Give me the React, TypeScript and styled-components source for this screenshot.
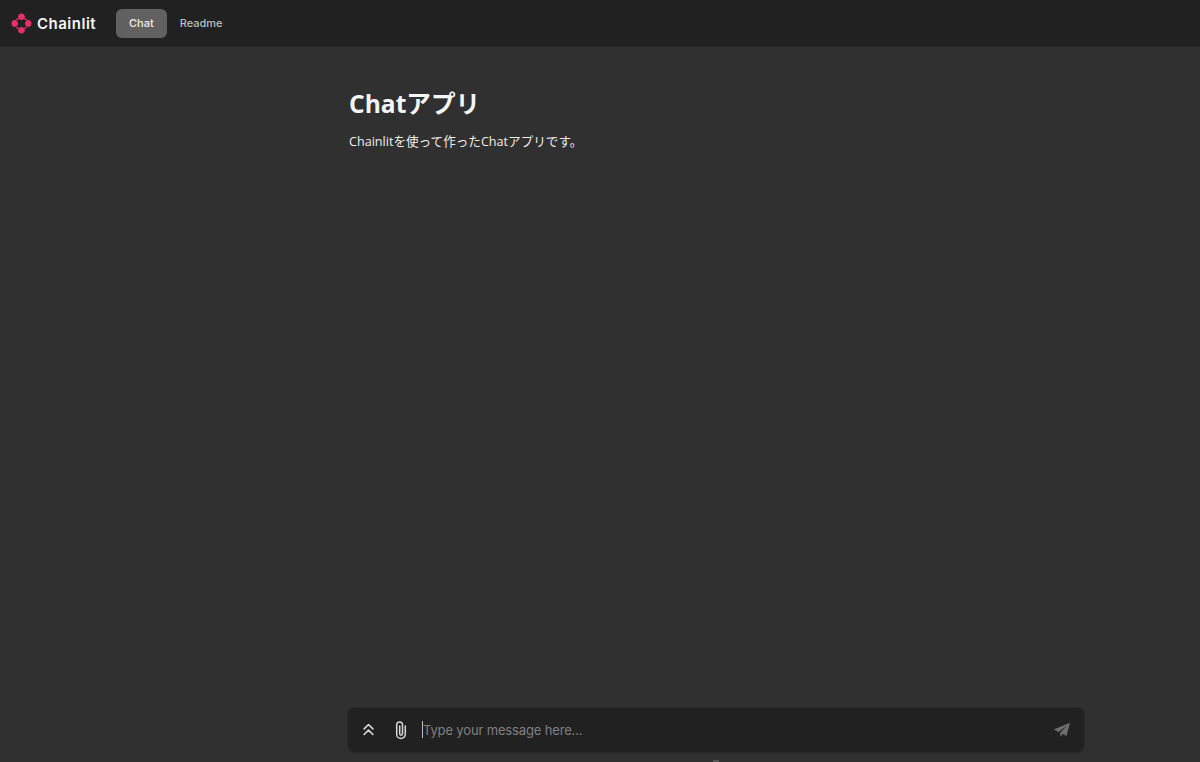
import React from "react";
import styled, { createGlobalStyle } from "styled-components";

const GlobalStyle = createGlobalStyle`
  html, body {
    margin: 0;
    height: 100%;
    overflow: hidden;
    background: #303030;
  }
  #root {
    height: 100%;
  }
`;

const App: React.FC = () => {
  return (
    <>
      <GlobalStyle />
      <Page>
        <TopBar>
          <Brand>
            <LogoMark viewBox="0 0 22 22" aria-hidden="true">
              <path d="M11 .5c2 0 3.600 1.600 3.600 3.400 0 1.300-.7 2.100-1.500 2.700-1.300 1-2.900 1-4.200 0-.8-.6-1.500-1.400-1.500-2.700C7.400 2.100 9 .5 11 .5Z" />
              <path d="M11 21.500c-2 0-3.600-1.600-3.600-3.400 0-1.300.7-2.100 1.500-2.700 1.300-1 2.900-1 4.200 0 .8.600 1.500 1.400 1.500 2.700 0 1.800-1.600 3.400-3.600 3.400Z" />
              <path d="M.5 11c0-2 1.600-3.600 3.400-3.600 1.300 0 2.100.7 2.700 1.500 1 1.300 1 2.900 0 4.200-.6.8-1.400 1.500-2.700 1.500C2.100 14.600.5 13 .5 11Z" />
              <path d="M21.500 11c0 2-1.600 3.600-3.400 3.600-1.300 0-2.100-.7-2.700-1.500-1-1.300-1-2.900 0-4.200.6-.8 1.400-1.500 2.700-1.500 1.800 0 3.400 1.600 3.400 3.600Z" />
              <path d="M5.500 7.700c1.400.1 2.600-.9 2.700-2.300L7 5.200 5.300 6.500ZM16.500 7.700c-1.400.1-2.600-.9-2.700-2.300l1.200-.2 1.700 1.300ZM5.500 14.300c1.400-.1 2.600.9 2.700 2.300l-1.200.2-1.700-1.300ZM16.500 14.300c-1.400-.1-2.600.9-2.700 2.300l1.200.2 1.700-1.300Z" />
            </LogoMark>
            <BrandName>Chainlit</BrandName>
          </Brand>
          <Nav aria-label="Pages">
            <NavTab $active>Chat</NavTab>
            <NavTab>Readme</NavTab>
          </Nav>
        </TopBar>

        <ChatColumn>
          <Welcome>
            <Title>Chatアプリ</Title>
            <Intro>Chainlitを使って作ったChatアプリです。</Intro>
          </Welcome>

          <Composer>
            <IconButton aria-label="Settings">
              <svg width="15" height="15" viewBox="0 0 24 24" fill="none" stroke="currentColor" strokeWidth="2.6" strokeLinecap="round" strokeLinejoin="round">
                <path d="m5 11 7-7 7 7" />
                <path d="m5 20 7-7 7 7" />
              </svg>
            </IconButton>
            <ClipButton aria-label="Attach file">
              <svg width="18" height="20" viewBox="0 0 18 20" fill="none" stroke="currentColor" strokeWidth="1.5" strokeLinecap="round">
                <path d="M13.300 6v8.300a4.300 4.300 0 0 1-8.600 0V4.800a2.900 2.900 0 0 1 5.800 0v9a1.400 1.400 0 0 1-2.800 0V6" />
              </svg>
            </ClipButton>
            <MessageField>
              <Caret />
              <Placeholder>Type your message here...</Placeholder>
            </MessageField>
            <SendButton aria-label="Send">
              <svg width="18" height="16" viewBox="0 0 18 16" fill="currentColor">
                <path d="M17 .8 .8 7.600l4.700 2.300L14 3.600 7.300 10.800V15l2.500-3 3.700 1.900Z" />
              </svg>
            </SendButton>
          </Composer>
          <Watermark />
        </ChatColumn>
      </Page>
    </>
  );
};

const Page = styled.div`
  display: flex;
  flex-direction: column;
  height: 762px;
  overflow: hidden;
  background: #303030;
  font-family: Inter, "Liberation Sans", sans-serif;
`;

const TopBar = styled.header`
  display: flex;
  align-items: center;
  flex: none;
  box-sizing: border-box;
  height: 47px;
  padding: 0 11px;
  background: #212121;
  border-bottom: 1px solid #2a2a2a;
`;

const Brand = styled.div`
  display: flex;
  align-items: center;
  gap: 5px;
  width: 105px;
`;

const LogoMark = styled.svg`
  width: 21px;
  height: 21px;
  fill: #e9306b;
`;

const BrandName = styled.span`
  color: #f5f5f5;
  font-family: Inter, "Liberation Sans", sans-serif;
  font-size: 15px;
  font-weight: 600;
  letter-spacing: 0.5px;
`;

const Nav = styled.nav`
  display: flex;
  align-items: center;
`;

const NavTab = styled.a<{ $active?: boolean }>`
  display: flex;
  align-items: center;
  height: 29px;
  padding: 0 13px;
  box-sizing: border-box;
  border-radius: 6px;
  background: ${(p) => (p.$active ? "#616161" : "transparent")};
  color: ${(p) => (p.$active ? "#eeeeee" : "#bdbdbd")};
  font-size: 11px;
  font-weight: 500;
`;

const ChatColumn = styled.main`
  display: flex;
  flex-direction: column;
  flex: 1;
  min-height: 0;
  box-sizing: border-box;
  width: 738px;
  margin-left: 347px;
`;

const Welcome = styled.section`
  flex: 1;
  padding: 40px 2px 0;
  font-family: "Open Sans", "Noto Sans CJK JP", sans-serif;
`;

const Title = styled.h1`
  margin: 0;
  color: #f5f5f5;
  font-size: 24.600px;
  font-weight: 700;
  line-height: 34px;
`;

const Intro = styled.p`
  margin: 11px 0 0;
  color: #eeeeee;
  font-size: 12.600px;
  line-height: 20px;
`;

const Composer = styled.form`
  display: flex;
  align-items: center;
  flex: none;
  box-sizing: border-box;
  height: 46px;
  margin-top: -1px;
  padding: 0 10px 0 4px;
  border: 1px solid #2a2a2a;
  border-radius: 8px;
  background: #212121;
`;

const IconButton = styled.button`
  display: flex;
  align-items: center;
  justify-content: center;
  width: 32px;
  height: 32px;
  margin-top: -1px;
  padding: 0;
  border: 0;
  background: none;
  color: #d6d6d6;
`;

const ClipButton = styled(IconButton)`
  margin-left: 1px;
`;

const MessageField = styled.div`
  display: flex;
  align-items: center;
  flex: 1;
  margin: -1px 0 0 5px;
`;

const Caret = styled.span`
  width: 1px;
  height: 17px;
  background: #bdbdbd;
`;

const Placeholder = styled.span`
  color: #808080;
  font-size: 13px;
  letter-spacing: -0.15px;
`;

const SendButton = styled(IconButton)`
  color: #6e6e6e;
  width: 24px;
`;

const Watermark = styled.div`
  flex: none;
  width: 6px;
  height: 2px;
  margin: 7px auto 0;
  background: #555555;
`;

export default App;
